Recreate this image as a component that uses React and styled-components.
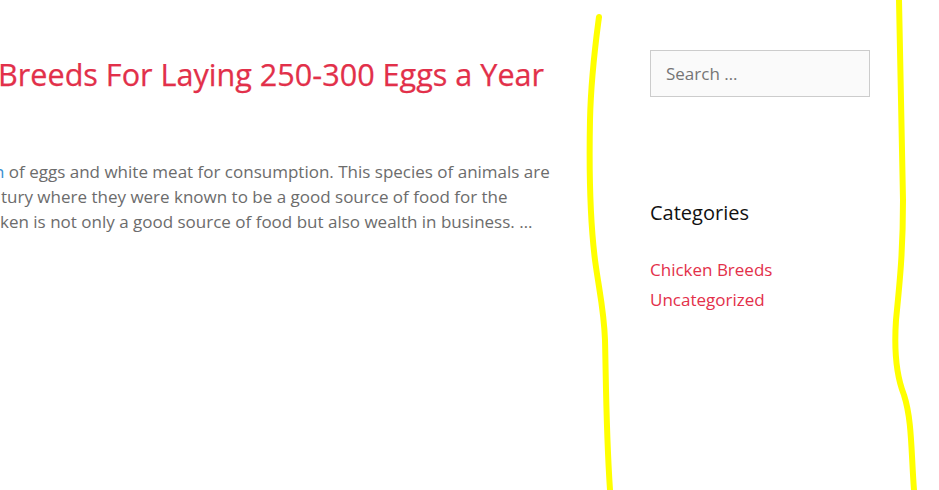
import styled, { createGlobalStyle } from 'styled-components';

const GlobalStyle = createGlobalStyle`
  html, body {
    margin: 0;
    padding: 0;
    background: #ffffff;
    font-family: "Open Sans", "Noto Sans", sans-serif;
  }
`;

const Page = styled.div`
  position: relative;
  width: 939px;
  height: 490px;
  overflow: hidden;
  display: flex;
  align-items: flex-start;
`;

const Main = styled.main`
  width: 580px;
  padding-top: 56px;
  overflow: hidden;
`;

const Title = styled.h2`
  margin: 0 0 0 -2px;
  font-size: 30.6px;
  line-height: 36px;
  font-weight: 400;
  color: #e2304a;
  white-space: nowrap;
  -webkit-text-stroke: 0.25px #e2304a;
`;

const Excerpt = styled.div`
  margin-top: 67px;
  font-size: 17px;
  line-height: 25px;
  color: #6c6c6c;
`;

const Line = styled.span`
  display: block;
  white-space: nowrap;
  margin-left: ${p => p.$shift || 0}px;
`;

const Cut = styled.span`
  color: #3b8fd0;
`;

const Sidebar = styled.aside`
  margin-left: 70px;
  width: 220px;
  padding-top: 50px;
`;

const SearchInput = styled.input`
  box-sizing: border-box;
  width: 220px;
  height: 47px;
  padding: 0 15px;
  border: 1px solid #cccccc;
  background: #fafafa;
  font-family: "Open Sans", "Noto Sans", sans-serif;
  font-size: 17px;
  color: #666;
  outline: none;

  &::placeholder {
    color: #757575;
  }
`;

const WidgetTitle = styled.h3`
  margin: 101px 0 0;
  font-size: 20px;
  line-height: 30px;
  font-weight: 400;
  color: #111;
`;

const CatList = styled.ul`
  list-style: none;
  margin: 27px 0 0;
  padding: 0;
`;

const CatItem = styled.li`
  font-size: 17px;
  line-height: 30px;
  color: #e3304a;
`;

const Marks = styled.svg`
  position: absolute;
  inset: 0;
  pointer-events: none;
`;

export default function App() {
  return (
    <>
      <GlobalStyle />
      <Page>
        <Main>
          <Title>Breeds For Laying 250-300 Eggs a Year</Title>
          <Excerpt>
            <Line $shift={-6}><Cut>n</Cut> of eggs and white meat for consumption. This species of animals are</Line>
            <Line $shift={1}>tury where they were known to be a good source of food for the</Line>
            <Line $shift={0}>ken is not only a good source of food but also wealth in business. …</Line>
          </Excerpt>
        </Main>
        <Sidebar>
          <SearchInput type="search" placeholder="Search …" />
          <WidgetTitle>Categories</WidgetTitle>
          <CatList>
            <CatItem>Chicken Breeds</CatItem>
            <CatItem>Uncategorized</CatItem>
          </CatList>
        </Sidebar>
        <Marks width="939" height="490" viewBox="0 0 939 490">
          <g fill="none" stroke="#ffff00" strokeWidth="6" strokeLinecap="round" strokeLinejoin="round">
            <path d="M599 17 C596 40 591 75 590 120 C589 170 590 220 595 260 C599 290 604 310 605 340 C606 380 606 430 610 490" />
            <path d="M899 0 C900 60 902 130 903 200 C903 250 900 280 896 320 C894 350 896 375 904 395 C912 420 911 450 914 490" />
          </g>
        </Marks>
      </Page>
    </>
  );
}
